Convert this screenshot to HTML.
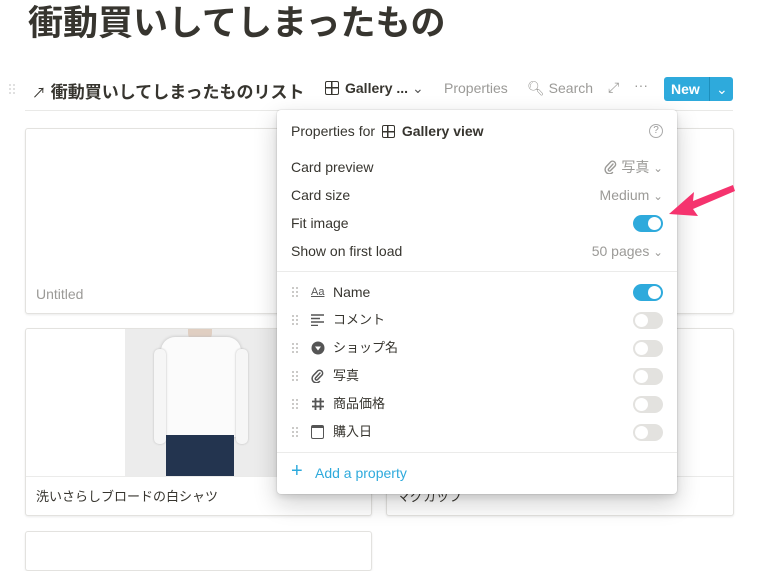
<!DOCTYPE html>
<html><head><meta charset="utf-8"><style>
*{margin:0;padding:0;box-sizing:border-box}
body{width:772px;height:551px;overflow:hidden;background:#fff;font-family:"Liberation Sans","Noto Sans CJK JP",sans-serif;color:#37352f;position:relative}
.abs{position:absolute}
.card{position:absolute;border:1px solid #e3e2df;border-radius:3px;box-shadow:0 1px 2px rgba(15,15,15,.08);background:#fff;overflow:hidden}
.row{position:absolute;left:14px;right:14px;font-size:14px;height:20px;line-height:20px}
.tog{position:absolute;right:14px;width:30px;height:17px;border-radius:9px;background:#e3e2df}
.tog:after{content:"";position:absolute;top:2px;left:2px;width:13px;height:13px;border-radius:50%;background:#fff}
.tog.on{background:#2eaadc}.tog.on:after{left:15px}
.grip{position:absolute;left:0;top:4px;width:8px;height:12px;background-image:radial-gradient(circle,#c7c6c4 1px,transparent 1.2px);background-size:4px 4px}
.val{position:absolute;right:14px;color:#9b9a97;font-size:14px}
</style></head><body>
<div class="abs" style="left:28px;top:-5px;font-size:35px;font-weight:bold;white-space:nowrap">衝動買いしてしまったもの</div>
<div class="abs" style="left:8px;top:83px;width:8px;height:12px;background-image:radial-gradient(circle,#ddd 1px,transparent 1.2px);background-size:4px 4px"></div>
<div class="abs" style="left:32px;top:78px;font-size:17px;font-weight:bold;white-space:nowrap"><span style="font-weight:normal;font-size:14px">↗</span> 衝動買いしてしまったものリスト</div>
<div class="abs" style="left:325px;top:81px;width:14px;height:14px;border:1.5px solid #37352f;border-radius:2px;background:linear-gradient(#37352f,#37352f) 5px 0/1.5px 100% no-repeat,linear-gradient(#37352f,#37352f) 0 5px/100% 1.5px no-repeat"></div>
<div class="abs" style="left:345px;top:80px;font-size:14px;font-weight:bold">Gallery ... <span style="font-weight:normal;color:#555">⌄</span></div>
<div class="abs" style="left:444px;top:80px;font-size:14px;color:#9b9a97">Properties</div>
<div class="abs" style="left:527px;top:80px;font-size:14px;color:#9b9a97">🔍︎ Search</div>
<div class="abs" style="left:608px;top:79px;font-size:14px;color:#9b9a97">⤢</div>
<div class="abs" style="left:634px;top:77px;font-size:14px;color:#9b9a97">···</div>
<div class="abs" style="left:664px;top:77px;width:69px;height:24px;background:#2eaadc;border-radius:3px;color:#fff;font-size:14px;font-weight:bold;line-height:24px;padding-left:7px">New<span style="position:absolute;left:45px;top:0;width:1px;height:24px;background:#1d8fbd"></span><span style="position:absolute;left:52px;font-weight:normal">⌄</span></div>
<div class="abs" style="left:25px;top:110px;width:708px;height:1px;background:#e9e9e7"></div>

<div class="card" style="left:25px;top:128px;width:347px;height:186px"><div class="abs" style="left:10px;top:157px;color:#9b9a97;font-size:14px">Untitled</div></div>
<div class="card" style="left:386px;top:128px;width:348px;height:186px"></div>
<div class="card" style="left:25px;top:328px;width:347px;height:188px">
 <div class="abs" style="left:99px;top:0;width:153px;height:147px;background:#ececec"></div>
 <div class="abs" style="left:162px;top:0;width:24px;height:14px;background:#e0cfc2;border-radius:0 0 10px 10px"></div>
 <div class="abs" style="left:135px;top:8px;width:80px;height:100px;background:#fbfbfb;border-radius:14px 14px 6px 6px;box-shadow:0 0 3px #bbb"></div>
 <div class="abs" style="left:128px;top:20px;width:12px;height:95px;background:#f6f6f6;border-radius:5px;box-shadow:0 0 2px #bbb"></div>
 <div class="abs" style="left:210px;top:20px;width:12px;height:95px;background:#f6f6f6;border-radius:5px;box-shadow:0 0 2px #bbb"></div>
 <div class="abs" style="left:140px;top:106px;width:68px;height:41px;background:#23344f"></div>
 <div class="abs" style="left:0;top:147px;width:347px;height:1px;background:#ebebea"></div>
 <div class="abs" style="left:10px;top:157px;font-size:13px">洗いさらしブロードの白シャツ</div>
</div>
<div class="card" style="left:386px;top:328px;width:348px;height:188px"><div class="abs" style="left:0;top:147px;width:348px;height:1px;background:#ebebea"></div><div class="abs" style="left:10px;top:157px;font-size:13px">マグカップ</div></div>
<div class="card" style="left:25px;top:531px;width:347px;height:40px"></div>

<div class="abs" style="left:277px;top:110px;width:400px;height:384px;background:#fff;border-radius:4px;box-shadow:0 0 0 1px rgba(15,15,15,.05),0 3px 6px rgba(15,15,15,.1),0 9px 24px rgba(15,15,15,.2)">
 <div class="row" style="top:11px">Properties for <span style="display:inline-block;width:13px;height:13px;border:1.5px solid #37352f;border-radius:2px;vertical-align:-2px;margin:0 3px;background:linear-gradient(#37352f,#37352f) 4.5px 0/1.5px 100% no-repeat,linear-gradient(#37352f,#37352f) 0 4.5px/100% 1.5px no-repeat"></span> <b>Gallery view</b>
  <span style="position:absolute;right:0;top:3px;width:14px;height:14px;border:1.3px solid #aaa;border-radius:50%;font-size:10px;line-height:12px;text-align:center;color:#999">?</span></div>
 <div class="row" style="top:47px">Card preview<span class="val" style="right:0"><svg width="13" height="14" viewBox="0 0 13 14" style="vertical-align:-2px"><path d="M9 4 L4.5 9 A1.3 1.3 0 0 0 6.3 10.8 L11 6 A3 3 0 0 0 6.8 1.8 L2.3 6.5 A4.3 4.3 0 0 0 8.5 12.5" fill="none" stroke="#9b9a97" stroke-width="1.4" stroke-linecap="round"/></svg> 写真 <small>⌄</small></span></div>
 <div class="row" style="top:75px">Card size<span class="val" style="right:0">Medium <small>⌄</small></span></div>
 <div class="row" style="top:103px">Fit image</div><div class="tog on" style="top:105px"></div>
 <div class="row" style="top:131px">Show on first load<span class="val" style="right:0">50 pages <small>⌄</small></span></div>
 <div class="abs" style="left:0;top:161px;width:400px;height:1px;background:#ebebea"></div>
 <div class="row" style="top:172px"><span class="grip"></span><span style="position:absolute;left:20px;font-size:11px;text-decoration:underline;color:#555">Aa</span><span style="position:absolute;left:42px">Name</span></div><div class="tog on" style="top:174px"></div>
 <div class="row" style="top:200px;font-size:13px"><span class="grip"></span><svg style="position:absolute;left:20px;top:4px" width="14" height="12"><path d="M0 1H13M0 4.5H9M0 8H13M0 11.5H7" stroke="#555" stroke-width="1.6"/></svg><span style="position:absolute;left:42px">コメント</span></div><div class="tog" style="top:202px"></div>
 <div class="row" style="top:228px;font-size:13px"><span class="grip"></span><svg style="position:absolute;left:20px;top:3px" width="14" height="14"><circle cx="7" cy="7" r="6.5" fill="#555"/><path d="M4 5.5H10L7 9.5Z" fill="#fff"/></svg><span style="position:absolute;left:42px">ショップ名</span></div><div class="tog" style="top:230px"></div>
 <div class="row" style="top:256px;font-size:13px"><span class="grip"></span><svg style="position:absolute;left:20px;top:3px" width="13" height="14" viewBox="0 0 13 14"><path d="M9 4 L4.5 9 A1.3 1.3 0 0 0 6.3 10.8 L11 6 A3 3 0 0 0 6.8 1.8 L2.3 6.5 A4.3 4.3 0 0 0 8.5 12.5" fill="none" stroke="#555" stroke-width="1.5" stroke-linecap="round"/></svg><span style="position:absolute;left:42px">写真</span></div><div class="tog" style="top:258px"></div>
 <div class="row" style="top:284px;font-size:13px"><span class="grip"></span><svg style="position:absolute;left:20px;top:3px" width="14" height="14"><path d="M4.5 1V13M9.5 1V13M1 4.5H13M1 9.5H13" stroke="#555" stroke-width="1.8"/></svg><span style="position:absolute;left:42px">商品価格</span></div><div class="tog" style="top:286px"></div>
 <div class="row" style="top:312px;font-size:13px"><span class="grip"></span><span style="position:absolute;left:20px;top:3px;width:13px;height:14px;border:1.5px solid #555;border-radius:2px;border-top-width:3px"></span><span style="position:absolute;left:42px">購入日</span></div><div class="tog" style="top:314px"></div>
 <div class="abs" style="left:0;top:342px;width:400px;height:1px;background:#ebebea"></div>
 <div class="row" style="top:353px;color:#2eaadc"><span style="font-size:20px;position:absolute;left:0;top:-2px">+</span><span style="position:absolute;left:24px">Add a property</span></div>
</div>
<svg class="abs" style="left:660px;top:180px" width="80" height="45"><path d="M73 5 L33 21 L34 12 L9 34 L38 36 L33 29 L75 11 Z" fill="#f5336e"/></svg>
</body></html>
